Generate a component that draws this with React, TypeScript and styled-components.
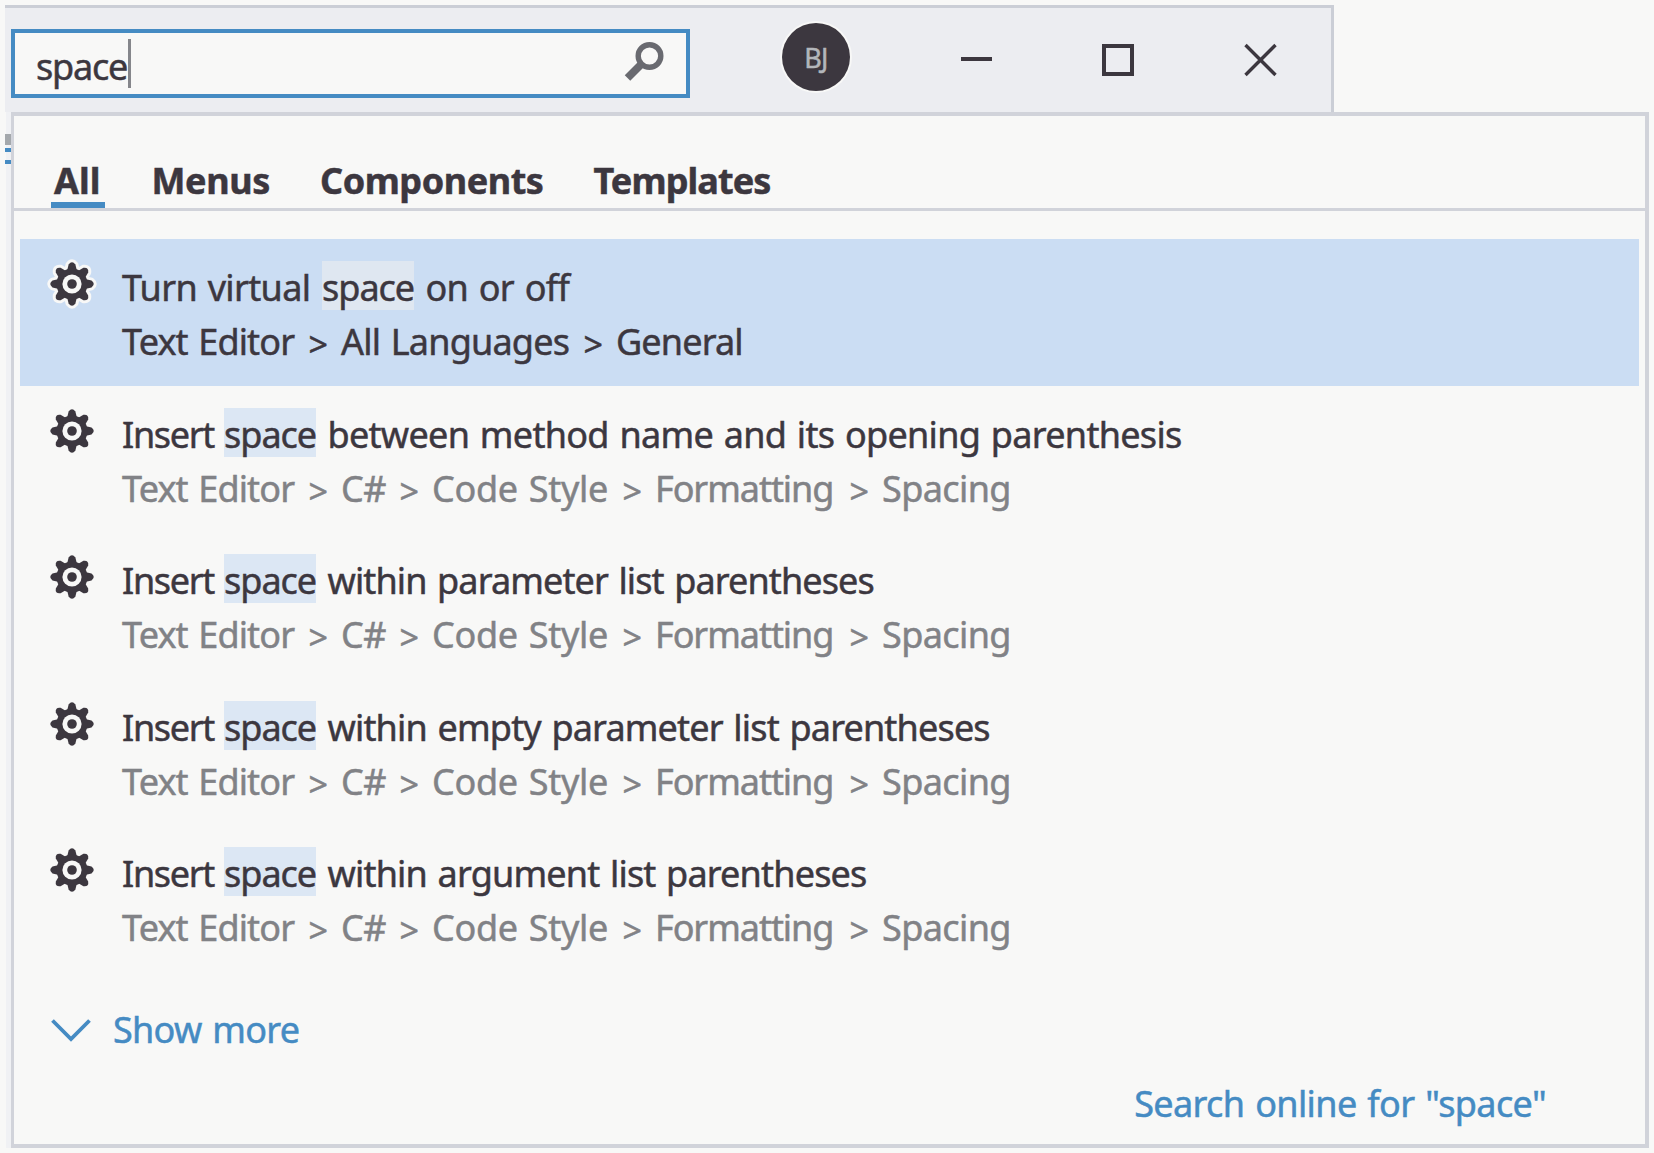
import React from "react";
import styled, { createGlobalStyle } from "styled-components";

const ink = "#3c373f";
const blue = "#458bc3";
const line = "#d1d3da";
const paper = "#f8f8f7";

const GlobalStyle = createGlobalStyle`
  * { box-sizing: border-box; }
  body {
    margin: 0;
    background: ${paper};
    overflow: hidden;
    font-family: "Noto Sans", "Open Sans", sans-serif;
    color: ${ink};
    -webkit-text-stroke: 0.5px currentColor;
  }
`;

const Screen = styled.div`
  width: 1654px;
  height: 1153px;
  padding-top: 5px;
  background: ${paper};
`;

const TitleBar = styled.header`
  display: flex;
  width: 1329px;
  height: 107px;
  margin-left: 5px;
  padding: 21px 0 0 6px;
  background: #ecedf1;
  border-top: 3px solid #cbced6;
  border-right: 3px solid #cbced6;
`;

const SearchBox = styled.div`
  display: flex;
  align-items: flex-start;
  justify-content: space-between;
  width: 679px;
  height: 69px;
  padding: 8px 20px 0 21px;
  background: ${paper};
  border: 4px solid ${blue};
`;

const Query = styled.div`
  display: flex;
  height: 50px;
  line-height: 51px;
  font-size: 36px;
  letter-spacing: -1.2px;
`;

const Caret = styled.span`
  width: 3px;
  height: 49px;
  margin-left: 1px;
  margin-top: -2px;
  background: #85868b;
`;

const Avatar = styled.div`
  display: flex;
  align-items: center;
  justify-content: center;
  width: 68px;
  height: 68px;
  margin: -6px 0 0 92px;
  border-radius: 50%;
  background: ${ink};
  box-shadow: 0 0 0 2px ${paper};
  color: #b3b6bb;
  font-size: 27px;
  letter-spacing: -0.8px;
`;

const WindowButtons = styled.div`
  display: flex;
  gap: 98px;
  margin: 9px 0 0 105px;
`;

const Popup = styled.main`
  width: 1638px;
  height: 1036px;
  margin-left: 11px;
  background: ${paper};
  border: 4px solid ${line};
  border-left-width: 3px;
  box-shadow: -5px 0 0 #f0f1f4;
`;

const Tabs = styled.nav`
  display: flex;
  height: 95px;
  padding: 36px 0 0 37px;
  border-bottom: 3px solid ${line};
`;

const Tab = styled.div<{ $w: number; $active?: boolean; $ls: number }>`
  width: ${(p) => p.$w}px;
  height: 56px;
  margin-right: 43.5px;
  padding-left: 3px;
  border-bottom: 6px solid ${(p) => (p.$active ? blue : "transparent")};
  font-size: 36px;
  font-weight: 700;
  line-height: 57px;
  letter-spacing: ${(p) => p.$ls}px;
  white-space: nowrap;
`;

const Results = styled.ul`
  margin: 28px 0 0;
  padding: 0 6px;
  list-style: none;
`;

const Result = styled.li<{ $selected?: boolean }>`
  display: flex;
  height: 146.5px;
  padding: 20px 0 0 27px;
  background: ${(p) => (p.$selected ? "#cbddf3" : "transparent")};
  --crumb: ${(p) => (p.$selected ? ink : "#818286")};
  --mark: ${(p) => (p.$selected ? "#dfe7f1" : "#dce7f4")};
  --halo: ${(p) => (p.$selected ? paper : "transparent")};
`;

const ResultText = styled.div`
  margin-left: 25px;
  font-size: 36px;
  word-spacing: 2px;
  white-space: pre;
`;

const Title = styled.div<{ $ls: number }>`
  display: flex;
  height: 54px;
  line-height: 58px;
  letter-spacing: ${(p) => p.$ls}px;
`;

const Lead = styled.span<{ $w: number; $ls: number }>`
  width: ${(p) => p.$w}px;
  letter-spacing: ${(p) => p.$ls}px;
`;

const Mark = styled.mark`
  width: 92px;
  height: 49px;
  margin-top: 2px;
  margin-right: 11.5px;
  line-height: 54px;
  letter-spacing: -1px;
  color: inherit;
  background: var(--mark);
`;

const Crumbs = styled.div`
  display: flex;
  line-height: 58px;
  color: var(--crumb);
`;

const Crumb = styled.span<{ $w: number; $ls: number }>`
  width: ${(p) => p.$w}px;
  letter-spacing: ${(p) => p.$ls}px;
`;

const Arrow = styled.span`
  width: 32px;
  padding-top: 2px;
  font-size: 34px;
  text-indent: -0.5px;
`;

const ShowMore = styled.div`
  display: flex;
  align-items: center;
  gap: 22px;
  height: 54px;
  margin: 31px 0 0 37px;
  color: ${blue};
  font-size: 36px;
  letter-spacing: -0.7px;
  word-spacing: 2px;
`;

const SearchOnline = styled.div`
  display: flex;
  justify-content: flex-end;
  margin: 19px 99px 0 0;
  color: ${blue};
  font-size: 36px;
  line-height: 56px;
  letter-spacing: -0.62px;
  word-spacing: 2px;
  white-space: nowrap;
`;

const ToolbarSliver = styled.div`
  position: absolute;
  left: 5px;
  top: 134px;
  width: 6px;
  height: 30px;
  background: linear-gradient(#a4a8ac 0 11px, transparent 11px 14px, ${blue} 14px 18px, transparent 18px 26px, ${blue} 26px 30px);
`;

const teeth = [0, 45, 90, 135, 180, 225, 270, 315];

function GearShape() {
  return (
    <>
      {teeth.map((a) => (
        <path key={a} d="M-5.2 -12 L-3.4 -19.5 Q0 -24 3.4 -19.5 L5.2 -12 Z" transform={`rotate(${a})`} />
      ))}
      <circle r="15.5" />
    </>
  );
}

function Gear() {
  return (
    <svg width="50" height="50" viewBox="-25 -25 50 50" overflow="visible">
      <g fill="var(--halo)" stroke="var(--halo)" strokeWidth="6" strokeLinejoin="round">
        <GearShape />
      </g>
      <g fill={ink}>
        <GearShape />
      </g>
      <circle r="9.6" fill={paper} />
      <circle r="4.8" fill={ink} />
    </svg>
  );
}

type CrumbSpec = [text: string, width: number, spacing: number];

type Item = {
  lead: string;
  leadW: number;
  leadLs: number;
  rest: string;
  ls: number;
  crumbs: CrumbSpec[];
  selected?: boolean;
};

const csharp: CrumbSpec[] = [
  ["Text Editor", 187, -0.85],
  ["C#", 59, -0.5],
  ["Code Style", 191, -0.3],
  ["Formatting", 195, -1.05],
  ["Spacing", 130, -0.6],
];

const insert = { lead: "Insert", leadW: 102, leadLs: -1.3 };

const items: Item[] = [
  {
    lead: "Turn virtual",
    leadW: 200,
    leadLs: -0.65,
    rest: "on or off",
    ls: -0.7,
    selected: true,
    crumbs: [["Text Editor", 187, -0.85], ["All Languages", 243, -0.8], ["General", 130, -0.85]],
  },
  { ...insert, rest: "between method name and its opening parenthesis", ls: -0.7, crumbs: csharp },
  { ...insert, rest: "within parameter list parentheses", ls: -0.88, crumbs: csharp },
  { ...insert, rest: "within empty parameter list parentheses", ls: -0.82, crumbs: csharp },
  { ...insert, rest: "within argument list parentheses", ls: -0.81, crumbs: csharp },
];

export default function App() {
  return (
    <Screen>
      <GlobalStyle />
      <TitleBar>
        <SearchBox>
          <Query>
            space
            <Caret />
          </Query>
          <svg width="42" height="42" viewBox="0 0 42 42" fill="none" stroke="#696a70">
            <circle cx="25.5" cy="15" r="11.3" strokeWidth="5.4" />
            <path d="M17.5 23 L3.5 37" strokeWidth="7.8" />
          </svg>
        </SearchBox>
        <Avatar>BJ</Avatar>
        <WindowButtons>
          <svg width="44" height="44" viewBox="0 0 44 44" stroke={ink} strokeWidth="4">
            <path d="M6 21 H37" />
          </svg>
          <svg width="44" height="44" viewBox="0 0 44 44" fill="none" stroke={ink} strokeWidth="4">
            <rect x="7" y="8" width="28" height="28" />
          </svg>
          <svg width="44" height="44" viewBox="0 0 44 44" stroke={ink} strokeWidth="3.4">
            <path d="M6.5 7 L36.5 37 M36.5 7 L6.5 37" />
          </svg>
        </WindowButtons>
      </TitleBar>
      <Popup>
        <Tabs>
          <Tab $w={54} $ls={0} $active>All</Tab>
          <Tab $w={125} $ls={-0.4}>Menus</Tab>
          <Tab $w={230} $ls={-0.45}>Components</Tab>
          <Tab $w={180} $ls={-0.9}>Templates</Tab>
        </Tabs>
        <Results>
          {items.map((item) => (
            <Result key={item.rest} $selected={item.selected}>
              <Gear />
              <ResultText>
                <Title $ls={item.ls}>
                  <Lead $w={item.leadW} $ls={item.leadLs}>{item.lead}</Lead>
                  <Mark>space</Mark>
                  <span>{item.rest}</span>
                </Title>
                <Crumbs>
                  {item.crumbs.map(([text, w, ls], i) => (
                    <React.Fragment key={text}>
                      {i > 0 && <Arrow>&gt;</Arrow>}
                      <Crumb $w={w} $ls={ls}>{text}</Crumb>
                    </React.Fragment>
                  ))}
                </Crumbs>
              </ResultText>
            </Result>
          ))}
        </Results>
        <ShowMore>
          <svg width="40" height="24" viewBox="0 0 40 24" fill="none" stroke={blue} strokeWidth="3.8">
            <path d="M1.5 2.5 L20 21 L38.5 2.5" />
          </svg>
          <span>Show more</span>
        </ShowMore>
        <SearchOnline>Search online for "space"</SearchOnline>
      </Popup>
      <ToolbarSliver />
    </Screen>
  );
}
